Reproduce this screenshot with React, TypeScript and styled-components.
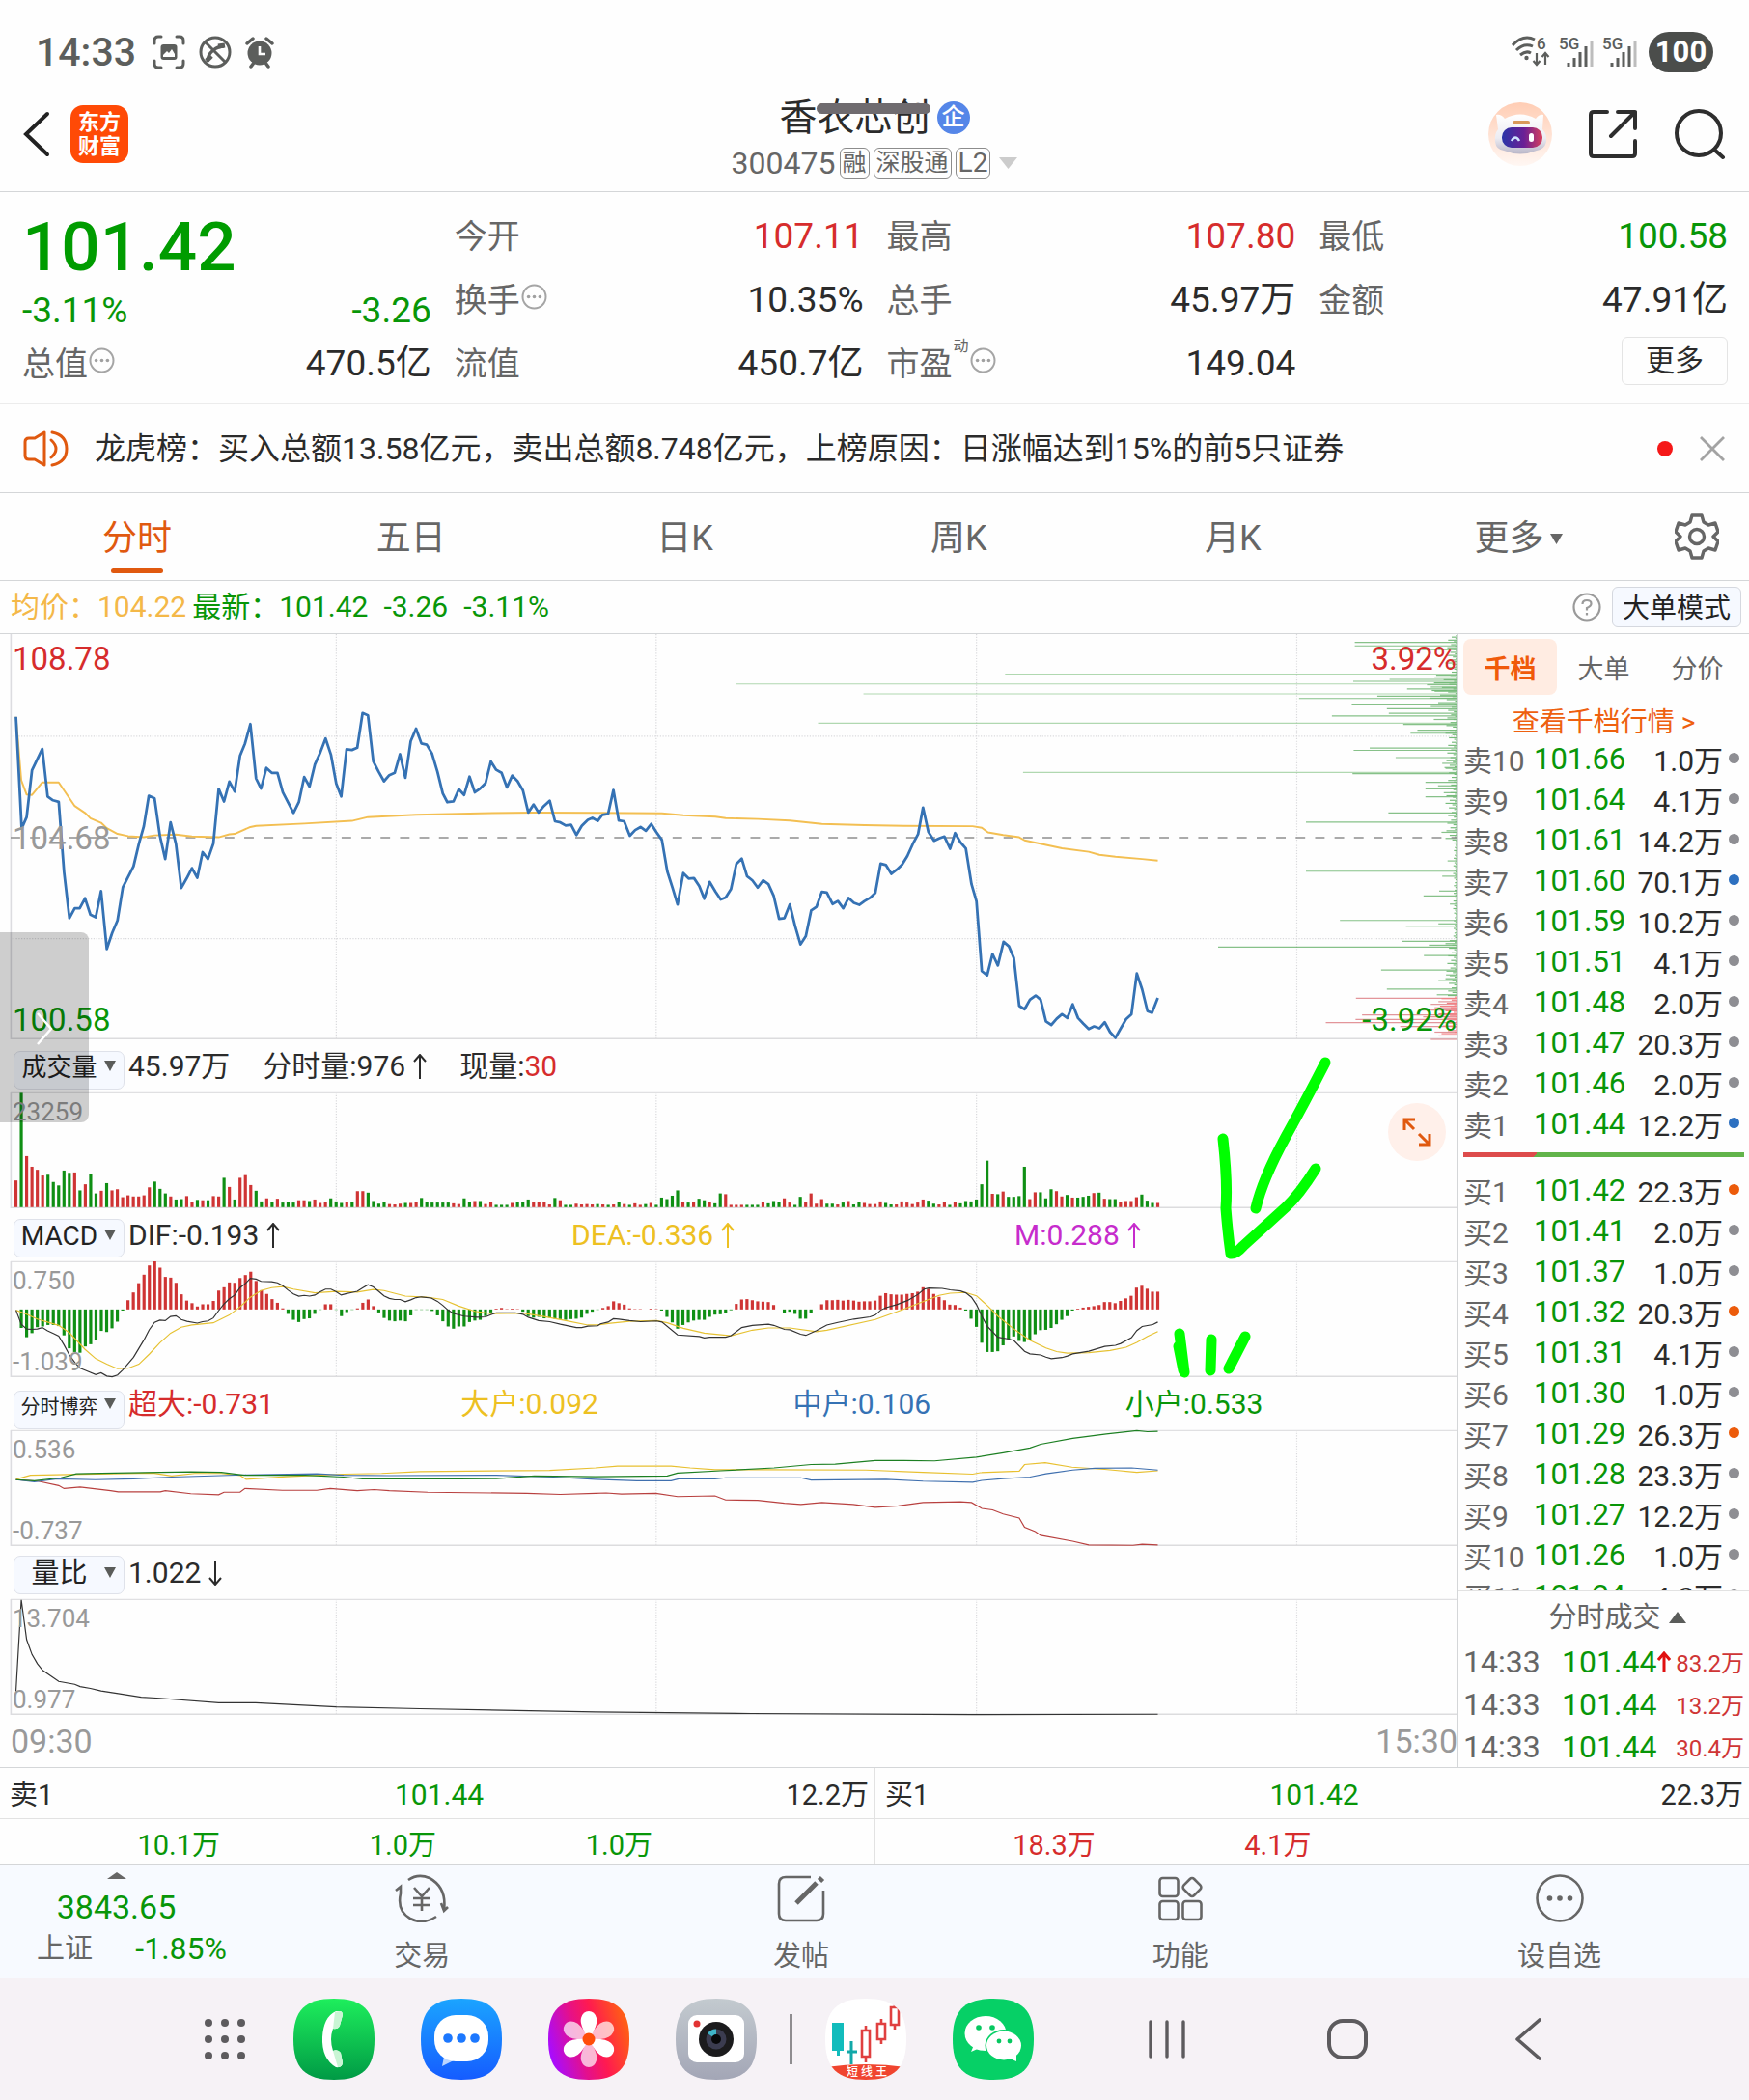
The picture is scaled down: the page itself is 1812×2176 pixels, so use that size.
import React from "react";
import styled, { createGlobalStyle, css } from "styled-components";

const GREEN = "#089608";
const RED = "#d62c2c";
const ORANGE = "#e0590f";
const GREY = "#666666";
const INK = "#2b2b2b";
const LINE = "#d4d6d8";

const GlobalStyle = createGlobalStyle`
  * { box-sizing: border-box; }
  body { margin: 0; background: #ffffff; }
  button, select { font-family: inherit; }
  button { border: 0; padding: 0; background: none; cursor: pointer; color: inherit; }
  dl, dd, dt, h1, p, ul { margin: 0; padding: 0; }
  ul { list-style: none; }
  table { border-collapse: collapse; }
  td, th { padding: 0; font-weight: 400; text-align: left; }
  svg { display: block; flex: none; }
`;

const Page = styled.div`
  width: 100%;
  background: #fefefe;
  color: ${INK};
  font-family: Roboto, "Noto Sans CJK SC", sans-serif;
`;

/* ---------- status bar ---------- */

const StatusBar = styled.div`
  display: flex;
  justify-content: space-between;
  align-items: center;
  height: 80px;
  padding: 28px 37px 0 37px;
  color: #5c5e5c;
`;

const StatusGroup = styled.div<{ $gap: number }>`
  display: flex;
  align-items: center;
  gap: ${(p) => p.$gap}px;
`;

const Clock = styled.span`
  font-size: 41px;
  line-height: 48px;
  font-weight: 500;
  margin-right: 3px;
`;

const Battery = styled.span`
  width: 67px;
  height: 42px;
  margin-left: 3px;
  border-radius: 21px;
  background: #4b4d4b;
  color: #ffffff;
  font-size: 31px;
  line-height: 42px;
  font-weight: 700;
  text-align: center;
`;

/* ---------- header ---------- */

const Header = styled.header`
  display: grid;
  grid-template-columns: 1fr auto 1fr;
  align-items: center;
  height: 119px;
  padding: 0 24px;
  border-bottom: 1px solid ${LINE};
`;

const HeaderSide = styled.div<{ $end?: boolean }>`
  display: flex;
  align-items: center;
  gap: ${(p) => (p.$end ? 38 : 21)}px;
  justify-content: ${(p) => (p.$end ? "flex-end" : "flex-start")};
`;

const BrandLogo = styled.span`
  width: 60px;
  height: 60px;
  padding: 5px 0;
  border-radius: 13px;
  background: #ff4a06;
  color: #ffffff;
  font-size: 22px;
  line-height: 25px;
  font-weight: 700;
  text-align: center;
`;

const HeaderCenter = styled.div`
  display: flex;
  flex-direction: column;
  align-items: center;
  gap: 5px;
  padding-top: 10px;
`;

const TitleRow = styled.div`
  display: flex;
  align-items: center;
  gap: 7px;
  height: 44px;
`;

const StockName = styled.h1`
  position: relative;
  font-size: 39px;
  line-height: 44px;
  font-weight: 400;
`;

const NameStrike = styled.span`
  position: absolute;
  left: 39px;
  right: 0;
  top: 7px;
  height: 11px;
  border-radius: 6px;
  background: #6f6b6f;
`;

const CompanyBadge = styled.span`
  width: 34px;
  height: 34px;
  border-radius: 50%;
  background: #5586e8;
  color: #ffffff;
  font-size: 24px;
  line-height: 33px;
  font-weight: 500;
  text-align: center;
`;

const CodeRow = styled.div`
  display: flex;
  align-items: center;
  gap: 4px;
  height: 40px;
  color: ${GREY};
  font-size: 32px;
  line-height: 40px;
  > svg {
    margin-left: 5px;
  }
`;

const CodeTag = styled.span`
  height: 32px;
  padding: 0 2px;
  border: 1px solid #8c8c8c;
  border-radius: 6px;
  font-size: 25px;
  line-height: 30px;
`;

const CodeTagWide = styled(CodeTag)`
  font-size: 28px;
`;

/* ---------- quote ---------- */

const Quote = styled.section`
  display: grid;
  grid-template-columns: repeat(4, 1fr);
  column-gap: 24px;
  padding: 13px 22px 8px 23px;
  border-bottom: 1px solid #ececec;
`;

const QuoteColumn = styled.dl`
  display: flex;
  flex-direction: column;
  min-width: 0;
`;

const Price = styled.dt`
  color: #009c00;
  font-size: 71px;
  line-height: 88px;
  font-weight: 500;
`;

const ChangeRow = styled.dd`
  display: flex;
  justify-content: space-between;
  color: ${GREEN};
  font-size: 37px;
  line-height: 44px;
`;

const QuoteRow = styled.div`
  display: flex;
  justify-content: space-between;
  align-items: center;
  height: 66px;
`;

const QuoteLabel = styled.dt`
  display: flex;
  align-items: center;
  gap: 1px;
  color: ${GREY};
  font-size: 34px;
  line-height: 44px;
  > svg {
    margin-bottom: 8px;
  }
`;

const QuoteSup = styled.sup`
  align-self: flex-start;
  font-size: 16px;
  line-height: 8px;
`;

const QuoteValue = styled.dd<{ $color?: string }>`
  color: ${(p) => p.$color ?? INK};
  font-size: 37px;
  line-height: 44px;
`;

const MoreButton = styled.button`
  width: 110px;
  height: 50px;
  margin: 0 0 6px auto;
  border: 1px solid #e4e4e4;
  border-radius: 6px;
  font-size: 30px;
  line-height: 46px;
  color: ${INK};
`;

/* ---------- notice ---------- */

const Notice = styled.section`
  display: flex;
  align-items: center;
  height: 92px;
  padding: 0 24px;
  border-bottom: 1px solid ${LINE};
`;

const NoticeText = styled.p`
  flex: 1;
  min-width: 0;
  padding-left: 26px;
  overflow: hidden;
  white-space: nowrap;
  text-overflow: ellipsis;
  font-size: 32px;
  line-height: 44px;
`;

const NoticeDot = styled.span`
  width: 16px;
  height: 16px;
  margin-right: 27px;
  border-radius: 50%;
  background: #f51818;
`;

/* ---------- period tabs ---------- */

const PeriodTabs = styled.nav`
  display: grid;
  grid-template-columns: repeat(6, minmax(0, 1fr)) 109px;
  height: 91px;
  border-bottom: 1px solid ${LINE};
`;

const PeriodTab = styled.button<{ $active?: boolean; $menu?: boolean }>`
  position: relative;
  display: flex;
  align-items: center;
  justify-content: center;
  gap: 6px;
  padding: 4px 0 0 ${(p) => (p.$menu ? 24 : 0)}px;
  color: ${(p) => (p.$active ? ORANGE : GREY)};
  font-size: 36px;
  line-height: 44px;
  ${(p) =>
    p.$active &&
    css`
      &::after {
        content: "";
        position: absolute;
        left: 50%;
        bottom: 7px;
        width: 54px;
        height: 5px;
        margin-left: -27px;
        border-radius: 3px;
        background: ${ORANGE};
      }
    `}
`;

const GearButton = styled.button`
  display: flex;
  align-items: center;
  justify-content: center;
`;

/* ---------- latest line ---------- */

const LatestBar = styled.div`
  display: flex;
  align-items: center;
  height: 55px;
  padding: 0 8px 0 11px;
  border-bottom: 1px solid ${LINE};
  font-size: 30px;
  line-height: 40px;
`;

const LatestText = styled.span<{ $color: string; $gap: number }>`
  margin-right: ${(p) => p.$gap}px;
  color: ${(p) => p.$color};
`;

const LatestActions = styled.div`
  display: flex;
  align-items: center;
  gap: 11px;
  margin-left: auto;
`;

const ModeButton = styled.button`
  width: 134px;
  height: 42px;
  padding-top: 4px;
  border: 1px solid #d5d8df;
  border-radius: 6px;
  background: #f6f9ff;
  font-size: 28px;
  line-height: 36px;
  color: #222222;
`;

/* ---------- charts ---------- */

const Board = styled.main`
  display: flex;
`;

const ChartColumn = styled.section`
  position: relative;
  flex: 1;
  min-width: 0;
  padding-left: 11px;
`;

const ChartFrame = styled.div<{ $height: number }>`
  position: relative;
  height: ${(p) => p.$height}px;
  > svg:first-child {
    width: 100%;
    height: 100%;
    overflow: visible;
  }
`;

type Spot = "top" | "middle" | "bottom";

const AxisLabel = styled.span<{ $spot: Spot; $color?: string; $right?: boolean; $large?: boolean }>`
  position: absolute;
  ${(p) => (p.$right ? "right: 1px;" : "left: 2px;")}
  ${(p) => p.$spot === "top" && `top: ${p.$large ? 6 : 4}px;`}
  ${(p) => p.$spot === "middle" && "top: 192px;"}
  ${(p) => p.$spot === "bottom" && "bottom: 0;"}
  color: ${(p) => p.$color ?? "#999999"};
  font-size: ${(p) => (p.$large ? 33 : 26)}px;
  line-height: ${(p) => (p.$large ? 40 : 32)}px;
`;

const IndicatorBar = styled.div`
  display: flex;
  align-items: center;
  height: 55px;
  padding-left: 3px;
  font-size: 30px;
  line-height: 40px;
`;

const IndicatorPicker = styled.label`
  position: relative;
  flex: none;
  width: 115px;
  height: 40px;
  margin-right: 4px;
  svg {
    position: absolute;
    right: 9px;
    top: 14px;
    pointer-events: none;
  }
`;

const IndicatorSelect = styled.select<{ $size: number }>`
  appearance: none;
  width: 115px;
  height: 40px;
  padding: 0 24px 6px 4px;
  border: 1px solid #dfe2ea;
  border-radius: 7px;
  background: #f6f9ff;
  color: #222222;
  font-size: ${(p) => p.$size}px;
  text-align-last: center;
`;

const IndicatorValues = styled.div<{ $even?: boolean }>`
  display: flex;
  flex: 1;
  gap: ${(p) => (p.$even ? 0 : 34)}px;
  > span {
    flex: ${(p) => (p.$even ? "1 1 0" : "none")};
  }
`;

const IndicatorValue = styled.span<{ $color?: string }>`
  display: flex;
  align-items: center;
  gap: 8px;
  color: ${(p) => p.$color ?? INK};
`;

const Hot = styled.span`
  color: ${RED};
`;

const TimeAxis = styled.div`
  display: flex;
  justify-content: space-between;
  align-items: center;
  height: 54px;
  color: #999999;
  font-size: 34px;
  line-height: 44px;
`;

const ExpandButton = styled.button`
  position: absolute;
  right: 12px;
  top: 11px;
  display: flex;
  align-items: center;
  justify-content: center;
  width: 60px;
  height: 60px;
  border-radius: 50%;
  background: #fff0ea;
`;

const DrawerHandle = styled.button`
  position: absolute;
  left: 0;
  top: 309px;
  display: flex;
  align-items: flex-end;
  width: 92px;
  height: 197px;
  padding: 0 0 80px 38px;
  border-radius: 0 8px 8px 0;
  background: rgba(0, 0, 0, 0.19);
`;

const Marks = styled.svg`
  position: absolute;
  left: 0;
  top: 0;
  width: 100%;
  height: 100%;
  pointer-events: none;
`;

/* ---------- order book ---------- */

const SidePanel = styled.aside`
  display: flex;
  flex-direction: column;
  width: 302px;
  border-left: 1px solid ${LINE};
`;

const Book = styled.div`
  flex: 1 1 0px;
  min-height: 0;
  padding: 5px 5px 0;
  overflow: hidden;
`;

const BookTabs = styled.div`
  display: grid;
  grid-template-columns: repeat(3, 1fr);
  height: 58px;
`;

const BookTab = styled.button<{ $active?: boolean }>`
  padding-top: 5px;
  border-radius: 8px;
  background: ${(p) => (p.$active ? "#ffece2" : "transparent")};
  color: ${(p) => (p.$active ? "#f05a0a" : GREY)};
  font-size: 27px;
  line-height: 40px;
  font-weight: ${(p) => (p.$active ? 700 : 400)};
`;

const BookLink = styled.a`
  display: block;
  height: 46px;
  padding-top: 12px;
  color: #ee600f;
  font-size: 28px;
  line-height: 34px;
  text-align: center;
  text-decoration: none;
`;

const BookTable = styled.table`
  width: 100%;
  table-layout: fixed;
  font-size: 30px;
  line-height: 36px;
  tr {
    height: 42px;
  }
  th {
    width: 73px;
    padding-top: 4px;
    color: ${GREY};
    white-space: nowrap;
  }
`;

const BookPrice = styled.td`
  width: 96px;
  color: ${GREEN};
  font-size: 31px;
`;

const BookAmount = styled.td`
  width: 100px;
  padding-top: 4px;
  text-align: right;
  white-space: nowrap;
`;

const BookDotCell = styled.td`
  width: 22px;
  padding: 0 5px 4px 6px;
`;

const BookDot = styled.span<{ $color: string }>`
  display: block;
  width: 11px;
  height: 11px;
  border-radius: 50%;
  background: ${(p) => p.$color};
`;

const Balance = styled.div`
  height: 5px;
  margin: 8px 0 14px;
  background: linear-gradient(125deg, #dd4b4b 26%, #62b44a 26%);
`;

const Trades = styled.div`
  height: 183px;
  padding: 0 5px;
  border-top: 1px solid #e2e2e2;
`;

const TradesHeader = styled.button`
  display: flex;
  align-items: center;
  justify-content: center;
  gap: 8px;
  width: 100%;
  height: 51px;
  padding: 2px 0 0 28px;
  color: ${GREY};
  font-size: 29px;
  line-height: 40px;
`;

const TradesTable = styled.table`
  width: 100%;
  table-layout: fixed;
  white-space: nowrap;
  tr {
    height: 44px;
  }
`;

const TradeTime = styled.td`
  width: 102px;
  color: ${GREY};
  font-size: 32px;
  line-height: 40px;
`;

const TradePrice = styled.td`
  width: 99px;
  color: ${GREEN};
  font-size: 32px;
  line-height: 40px;
`;

const TradeArrow = styled.td`
  width: 16px;
`;

const TradeAmount = styled.td`
  padding: 4px 0 0 0;
  color: #cf3535;
  font-size: 24px;
  line-height: 36px;
  text-align: right;
`;

/* ---------- best levels ---------- */

const Levels = styled.section`
  display: grid;
  grid-template-columns: 1fr 1fr;
  border-top: 1px solid ${LINE};
  border-bottom: 1px solid ${LINE};
  font-size: 29px;
`;

const LevelSide = styled.div`
  & + & {
    border-left: 1px solid #e2e2e2;
  }
`;

const LevelBest = styled.div`
  display: grid;
  grid-template-columns: 1fr auto 1fr;
  height: 53px;
  padding: 2px 6px 0 10px;
  border-bottom: 1px solid #e2e2e2;
  line-height: 52px;
  span:last-child {
    text-align: right;
  }
`;

const LevelPrice = styled.span`
  color: ${GREEN};
  font-size: 30px;
`;

const LevelQueue = styled.div<{ $color: string }>`
  display: grid;
  grid-template-columns: repeat(4, 1fr);
  height: 46px;
  padding: 2px 6px 0 4px;
  color: ${(p) => p.$color};
  line-height: 50px;
  text-align: right;
`;

/* ---------- bottom bar ---------- */

const BottomBar = styled.nav`
  display: flex;
  height: 118px;
  background: #f7faff;
  color: ${GREY};
`;

const IndexButton = styled.button`
  display: flex;
  flex-direction: column;
  align-items: center;
  width: 241px;
  padding-top: 8px;
  color: ${GREEN};
`;

const IndexValue = styled.span`
  margin-top: 8px;
  font-size: 34px;
  line-height: 42px;
`;

const IndexRow = styled.span`
  display: flex;
  justify-content: space-between;
  width: 100%;
  padding: 0 6px 0 38px;
  font-size: 32px;
  line-height: 44px;
`;

const IndexName = styled.span`
  color: ${GREY};
  font-size: 29px;
`;

const BottomItem = styled.button`
  display: flex;
  flex: 1 1 0;
  flex-direction: column;
  align-items: center;
  gap: 15px;
  padding-top: 10px;
  font-size: 29px;
  line-height: 40px;
`;

/* ---------- system dock ---------- */

const Dock = styled.footer`
  display: flex;
  align-items: center;
  justify-content: center;
  height: 126px;
  padding-left: 4px;
  background: #f6f2f6;
`;

const DockButton = styled.button`
  display: flex;
  align-items: center;
  justify-content: center;
  width: 84px;
  height: 84px;
`;

const DockApps = styled.div`
  display: flex;
  gap: 48px;
  margin-left: 29px;
`;

const DockDivider = styled.span`
  width: 3px;
  height: 52px;
  margin: 0 5px 0 34px;
  background: #8f8d90;
`;

const DockNav = styled.div`
  display: flex;
  gap: 103px;
  margin-left: 96px;
`;

/* ---------- series ---------- */

type Pt = [number, number];

const pairs = (text: string, shift = 0): Pt[] =>
  text
    .trim()
    .split(/\s+/)
    .map((p) => {
      const [x, y] = p.split(",").map(Number);
      return [x + shift, y] as Pt;
    });

const HALF = 1568;
const track = (first: string, second: string) =>
  [...pairs(first), ...pairs(second, HALF)].map((p) => p.join(",")).join(" ");

const PRICE = track(
  `42,233 57,526 70,496 84,373 111,317 125,442 139,452 154,456 168,640 182,761 196,735 209,735 223,709 237,752 251,759 265,690 280,842 294,800 308,767 322,680 350,625 364,566 377,520 390,440 405,447 419,545 433,606 447,510 461,566 475,682 489,657 503,630 517,655 531,588 545,606 559,566 573,422 587,455 601,403 615,429 629,335 642,303 656,252 671,395 684,421 698,367 712,380 727,380 741,431 755,458 769,485 783,457 797,391 811,416 825,358 839,327 853,290 867,332 881,408 894,442 908,318 922,320 936,314 950,223 964,229 978,350 992,377 1006,402 1020,386 1034,380 1048,331 1062,393 1076,297 1090,264 1104,303 1118,306 1132,330 1146,377 1160,434 1172,457 1188,455 1202,423 1216,438 1230,390 1244,431 1258,421 1272,407 1286,350 1300,372 1314,380 1328,418 1342,387 1356,402 1370,426 1384,484 1398,463 1411,484 1425,467 1440,453 1454,507 1468,510 1482,518 1496,516 1510,543 1524,519 1540,503 1552,498 1566,506`,
  `10,490 25,488 39,425 53,505 67,507 82,545 96,530 110,522 124,532 138,514 152,536 166,556 180,638 194,682 207,725 222,643 236,657 250,656 264,677 277,710 291,666 306,691 320,712 333,707 347,685 361,619 375,605 389,651 403,662 417,681 431,662 445,672 459,703 473,763 487,761 501,725 515,782 529,830 543,808 557,741 571,731 585,692 598,694 613,724 627,716 641,735 655,708 669,721 683,726 697,716 711,708 725,695 739,618 753,622 767,645 781,634 795,621 809,598 823,567 837,541 850,471 864,535 879,558 892,552 906,547 921,579 934,538 948,562 962,578 977,672 990,717 1004,900 1018,911 1032,855 1046,885 1061,823 1075,835 1088,866 1102,991 1116,1000 1130,975 1145,964 1158,975 1172,1032 1186,1041 1200,1025 1214,1013 1228,1023 1242,987 1256,1023 1270,1038 1284,1052 1298,1045 1312,1050 1326,1034 1340,1060 1354,1075 1368,1050 1382,1026 1396,1013 1410,906 1424,948 1438,1005 1450,1009 1465,970`
);

const AVERAGE = track(
  `42,233 56,400 70,437 84,438 111,405 154,405 196,467 223,485 237,499 265,511 280,525 308,540 336,546 377,549 405,544 461,542 503,547 573,549 601,541 615,540 656,522 671,519 797,513 922,506 964,496 1090,490 1258,486 1400,484 1567,485`,
  `166,486 222,491 306,495 333,499 417,501 501,505 585,514 697,517 800,519 980,520 1004,524 1020,536 1060,543 1102,549 1116,557 1214,578 1284,587 1312,595 1354,600 1424,606 1465,610`
);

const DIF = track(
  `42,309 56,347 70,360 84,361 98,360 111,356 125,365 140,372 154,379 168,403 182,430 196,450 209,465 223,471 251,483 265,478 280,487 294,489 308,484 322,470 336,453 350,436 364,412 377,390 391,362 405,342 419,336 433,337 447,326 461,324 475,334 490,339 517,344 531,340 545,338 559,330 573,310 587,292 601,278 615,268 629,248 642,238 656,223 671,225 684,231 712,232 727,235 741,243 755,255 769,265 783,271 797,269 811,271 825,268 839,259 853,252 867,252 881,259 894,268 908,264 922,261 936,258 950,249 964,240 978,246 992,258 1006,270 1020,277 1034,280 1048,280 1062,286 1076,281 1090,275 1104,273 1130,276 1146,285 1160,296 1174,309 1188,318 1216,325 1250,328 1272,327 1286,321 1300,316 1350,316 1370,320 1384,328 1411,337 1440,340 1468,347 1510,356 1524,356 1540,352 1566,351`,
  `5,346 25,341 39,332 53,333 81,337 110,340 152,338 166,341 207,376 264,380 277,384 291,382 333,382 347,378 375,356 403,350 445,347 459,350 487,361 501,362 529,374 543,377 571,364 598,349 627,342 669,333 711,327 725,322 739,309 753,302 781,294 809,283 837,266 853,252 865,249 900,250 921,254 948,257 962,262 977,274 990,294 1004,325 1018,352 1046,382 1075,387 1088,391 1116,420 1130,427 1158,430 1172,436 1186,440 1214,437 1228,433 1242,427 1284,420 1326,407 1354,404 1368,399 1396,383 1410,364 1424,353 1452,348 1465,341`
);

const DEA = track(
  `42,309 70,320 98,333 154,350 182,370 223,415 251,440 280,455 308,467 336,466 364,455 391,428 419,397 447,371 475,355 503,349 559,343 601,322 629,300 656,274 684,256 712,248 741,245 769,252 825,262 881,258 936,260 978,253 1006,256 1062,271 1118,274 1160,280 1202,298 1244,312 1286,318 1370,317 1425,326 1482,337 1540,349 1566,349`,
  `25,345 80,339 152,337 180,343 222,358 277,371 347,378 403,363 445,357 501,357 571,367 598,363 725,334 795,308 837,291 892,269 921,263 962,261 990,270 1020,298 1046,325 1088,360 1130,390 1172,411 1200,421 1228,425 1284,424 1340,418 1382,409 1410,396 1438,380 1465,367`
);

const GAME: [string, string][] = [
  [
    "#b8403f",
    track(
      `42,767 100,771 154,783 168,791 210,787 290,797 310,800 420,800 433,797 500,805 573,808 587,801 629,801 642,791 740,796 830,796 865,791 936,797 980,794 1020,797 1120,801 1380,804 1468,807 1560,804`,
      `20,803 60,806 150,804 207,813 305,811 333,822 417,823 487,831 530,834 585,829 667,834 725,842 785,838 850,829 948,827 977,829 1004,845 1032,849 1060,860 1102,871 1116,896 1144,908 1158,918 1242,934 1284,944 1400,945 1424,942 1465,944`
    ),
  ],
  [
    "#e8c030",
    track(
      `42,766 80,755 180,753 400,749 450,757 510,750 580,750 630,756 645,766 750,759 900,752 1000,750 1100,745 1440,742 1560,735`,
      `50,730 190,730 240,735 305,740 420,740 700,741 850,747 980,752 1000,748 1102,744 1116,726 1170,721 1240,733 1326,739 1410,747 1465,743`
    ),
  ],
  [
    "#3f6fae",
    track(
      `42,767 90,773 150,765 250,767 350,765 450,760 640,754 830,751 900,755 1020,756 1300,755 1450,760 1560,766`,
      `100,770 190,770 210,765 305,765 333,762 530,762 557,768 753,766 850,771 980,774 1004,769 1060,764 1130,760 1172,751 1242,741 1300,736 1396,735 1465,741`
    ),
  ],
  [
    "#1c7f22",
    track(
      `42,767 90,770 160,762 200,751 300,749 500,746 580,747 640,755 800,755 900,760 950,765 1200,765 1300,764 1400,757 1560,759`,
      `180,757 207,749 320,743 460,735 557,726 620,725 725,715 800,715 880,716 990,706 1060,694 1130,681 1158,671 1242,655 1330,643 1410,634 1438,637 1465,636`
    ),
  ],
];

const RATIO = track(
  `42,1340 56,1092 70,1200 84,1240 98,1265 112,1283 154,1313 196,1321 210,1327 237,1332 265,1339 310,1346 370,1356 420,1359 573,1371 670,1371 881,1382 1100,1387 1560,1396`,
  `400,1400 980,1403 1465,1402`
);

/* Rising minutes are positive, falling minutes negative. */
const VOLUME = [
  70, -300, 134, 106, 98, 83, -85, -66, -57, -96, -90, 91, -44, 60, -88, -36, 43, -63, 44, 47, 26, 31, 28, 28, 31, 52,
  -67, -48, -36, 28, -20, -21, 29, 13, -19, 18, -18, 29, 28, -77, 53, -20, 77, 84, 58, -43, -15, 23, -13, 22, -12, -13,
  -12, 18, 18, -16, 20, 11, 13, -23, -15, -11, 14, -13, 42, 42, -38, -16, -9, -14, 8, 7, 9, -11, 11, 13, -24, -14, -12,
  -12, -12, -12, 10, 8, -23, -13, 16, -16, 8, 14, -6, -6, -6, 11, -14, -13, -20, 14, 14, 14, 7, -24, 18, -6, -6, 9, 7,
  8, 7, -8, 7, -6, 7, -14, 8, -6, 10, 6, -8, 11, -6, -25, -21, -30, -44, 14, -12, 14, -22, -18, 14, -10, -36, 34, 6, 6,
  6, -6, -6, -6, 14, -10, -16, -14, 23, 12, -6, -27, 13, 36, 9, 21, -9, -9, 7, -12, 16, -7, -13, 11, 8, 8, 15, -11, -7,
  7, 15, 12, 8, 12, 20, -17, -9, 7, 13, -6, 13, -10, -16, -15, -20, -60, -122, 35, -34, 41, -27, -27, -29, -106, 21,
  39, -39, -23, -47, 42, 28, -32, 25, -25, -27, -30, 37, -38, 22, -21, -21, 13, 16, 16, 26, -33, -17, -11, 11,
];

const MACD = [
  0, -50, -75, -64, -48, -46, -42, -42, -45, -70, -105, -115, -117, -100, -94, -82, -58, -61, -51, -33, -3, 25, 46, 71,
  94, 119, 130, 113, 88, 86, 72, 41, 24, 17, 8, 14, 14, 23, 51, 60, 73, 72, 85, 93, 102, 77, 52, 42, 28, 18, 3, -12,
  -28, -34, -26, -24, -12, -1, 14, 14, -1, -18, -7, -1, 3, 18, 27, 9, -8, -23, -30, -32, -30, -32, -16, -1, -1, -1, -4,
  -16, -32, -46, -52, -46, -46, -34, -30, -28, -18, -8, 2, 4, 1, 2, 1, -6, -18, -22, -20, -24, -22, -25, -26, -28, -26,
  -25, -22, -12, -6, -1, 4, 9, 22, 17, 13, 3, 1, 1, 0, 2, 1, -3, -20, -35, -52, -42, -35, -30, -28, -28, -20, -14, -13,
  -10, -2, 15, 27, 28, 25, 22, 21, 20, 12, 0, -9, -6, -12, -25, -25, -10, 0, 14, 25, 25, 26, 24, 26, 24, 21, 22, 22, 24,
  37, 44, 41, 40, 40, 42, 44, 48, 60, 56, 42, 34, 25, 13, 12, 5, -3, -25, -47, -90, -115, -115, -113, -97, -80, -73,
  -85, -88, -82, -67, -56, -55, -50, -40, -28, -18, -3, 2, 5, 7, 9, 12, 20, 20, 17, 23, 30, 37, 59, 64, 56, 48, 48,
];

/* Resting orders per price: [height in the chart, length]. */
const DEPTH: Pt[] = [
  [38, 269], [47, 269], [57, 220], [121, 1185], [129, 60], [135, 178], [140, 273], [147, 1890], [149, 80], [155, 70],
  [160, 132], [166, 60], [173, 1556], [179, 210], [185, 415], [200, 277], [206, 70], [212, 185], [224, 180], [231, 329],
  [240, 62], [250, 1675], [253, 142], [268, 105], [276, 123], [315, 230], [321, 272], [340, 162], [355, 40], [366, 34],
  [379, 1138], [382, 275], [405, 84], [414, 51], [422, 84], [432, 36], [443, 84], [485, 181], [509, 397], [536, 42],
  [611, 26], [638, 397], [651, 40], [690, 48], [703, 89], [724, 20], [767, 308], [776, 50], [782, 135], [822, 145],
  [832, 75], [837, 627], [859, 88], [897, 200], [910, 30], [925, 50], [947, 185], [962, 54], [971, 266], [980, 50],
  [987, 70], [996, 60], [1002, 100], [1015, 250], [1020, 90], [1027, 267], [1035, 345], [1045, 150], [1060, 60],
  [1070, 50], [1079, 70],
];

const MINOR: Pt[] = Array.from({ length: 262 }, (_, i) => {
  const y = 20 + i * 4;
  const noise = ((i * 37) % 23) / 23;
  const busy = y > 120 && y < 200 ? 76 : y > 955 ? 50 : y > 560 && y < 820 ? 8 : 30;
  return [y, 4 + noise * noise * busy];
});

/* ---------- chart parts ---------- */

const LEFT = 28;
const WIDTH = 3790;
const RIGHT = LEFT + WIDTH;
const COLUMNS = [881, 1719, 2558, 3397];

function Frame({ y, h, main }: { y: number; h: number; main?: boolean }) {
  return (
    <g fill="none">
      <g stroke="#d9d9dc" strokeWidth={3} strokeDasharray="3 4">
        {COLUMNS.map((x) => (
          <line key={x} x1={x} x2={x} y1={y} y2={y + h} />
        ))}
        {main && <line x1={LEFT} x2={RIGHT} y1={284} y2={284} />}
        {main && <line x1={LEFT} x2={RIGHT} y1={815} y2={815} />}
      </g>
      {!main && <line x1={LEFT} x2={RIGHT} y1={y + 1} y2={y + 1} stroke="#e0e0e2" strokeWidth={3} />}
      <line x1={LEFT} x2={RIGHT} y1={y + h - 2} y2={y + h - 2} stroke="#dcdcde" strokeWidth={4} />
      <line x1={LEFT + 1} x2={LEFT + 1} y1={y} y2={y + h} stroke="#dcdce0" strokeWidth={4} />
    </g>
  );
}

/* Draws one bar per minute; "stacked" keeps falling bars above the base line too. */
function Bars({ values, base, stacked }: { values: number[]; base: number; stacked?: boolean }) {
  const step = 2991 / (values.length - 1);
  return (
    <g>
      {values.map((v, i) => (
        <rect
          key={i}
          x={38 + i * step}
          y={v > 0 || stacked ? base - Math.abs(v) : base}
          width={8}
          height={Math.abs(v)}
          fill={v > 0 ? "#cf3434" : "#0f8f14"}
        />
      ))}
    </g>
  );
}

const Plot = ({ y, h, children }: { y: number; h: number; children: React.ReactNode }) => (
  <svg viewBox={`${LEFT} ${y} ${WIDTH} ${h}`} preserveAspectRatio="none" aria-hidden="true">
    {children}
  </svg>
);

/* ---------- small icons ---------- */

const Triangle = ({ w, h, color, up }: { w: number; h: number; color: string; up?: boolean }) => (
  <svg width={w} height={h} viewBox="0 0 10 10" preserveAspectRatio="none" aria-hidden="true">
    <path d={up ? "M0 10L5 0L10 10Z" : "M0 0H10L5 10Z"} fill={color} />
  </svg>
);

const Arrow = ({ down }: { down?: boolean }) => (
  <svg width="14" height="26" viewBox="0 0 14 26" fill="none" stroke="currentColor" strokeWidth="2" aria-hidden="true">
    {down ? <path d="M7 0V25M1 18L7 25L13 18" /> : <path d="M7 26V1M1 8L7 1L13 8" />}
  </svg>
);

const Dots = () => (
  <svg width="27" height="27" viewBox="0 0 27 27" aria-hidden="true">
    <circle cx="13.5" cy="13.5" r="12" fill="none" stroke="#a5a5a5" strokeWidth="2" />
    <g fill="#a0a0a0">
      <circle cx="7.6" cy="13.5" r="1.8" />
      <circle cx="13.5" cy="13.5" r="1.8" />
      <circle cx="19.4" cy="13.5" r="1.8" />
    </g>
  </svg>
);

const Signal = () => (
  <svg width="36" height="42" viewBox="0 -5 36 42" aria-hidden="true">
    <text x="0" y="13" fontSize="17" fontWeight="500" fill="#5c5e5c">5G</text>
    <g strokeWidth="3" stroke="#5c5e5c">
      <path d="M10 31V27M16 31V22M22 31V16M28 31V10" />
      <path d="M34 31V4" stroke="#bdbdbd" />
    </g>
  </svg>
);

function Picker({ name, options, size }: { name: string; options: string[]; size: number }) {
  return (
    <IndicatorPicker>
      <IndicatorSelect $size={size} aria-label={name} defaultValue={options[0]}>
        {options.map((o) => (
          <option key={o}>{o}</option>
        ))}
      </IndicatorSelect>
      <Triangle w={12} h={11} color="#5a5c5a" />
    </IndicatorPicker>
  );
}

/* ---------- order book data ---------- */

const DOT_GREY = "#8e8e93";
const DOT_BLUE = "#2d70c0";
const DOT_ORANGE = "#ec5b0b";

type Level = [string, string, string, string];

const SELLS: Level[] = [
  ["卖10", "101.66", "1.0万", DOT_GREY],
  ["卖9", "101.64", "4.1万", DOT_GREY],
  ["卖8", "101.61", "14.2万", DOT_GREY],
  ["卖7", "101.60", "70.1万", DOT_BLUE],
  ["卖6", "101.59", "10.2万", DOT_GREY],
  ["卖5", "101.51", "4.1万", DOT_GREY],
  ["卖4", "101.48", "2.0万", DOT_GREY],
  ["卖3", "101.47", "20.3万", DOT_GREY],
  ["卖2", "101.46", "2.0万", DOT_GREY],
  ["卖1", "101.44", "12.2万", DOT_BLUE],
];

const BUYS: Level[] = [
  ["买1", "101.42", "22.3万", DOT_ORANGE],
  ["买2", "101.41", "2.0万", DOT_GREY],
  ["买3", "101.37", "1.0万", DOT_GREY],
  ["买4", "101.32", "20.3万", DOT_ORANGE],
  ["买5", "101.31", "4.1万", DOT_GREY],
  ["买6", "101.30", "1.0万", DOT_GREY],
  ["买7", "101.29", "26.3万", DOT_ORANGE],
  ["买8", "101.28", "23.3万", DOT_GREY],
  ["买9", "101.27", "12.2万", DOT_GREY],
  ["买10", "101.26", "1.0万", DOT_GREY],
  ["买11", "101.24", "4.0万", DOT_GREY],
];

const TRADES: [string, string, boolean, string][] = [
  ["14:33", "101.44", true, "83.2万"],
  ["14:33", "101.44", false, "13.2万"],
  ["14:33", "101.44", false, "30.4万"],
];

function LevelTable({ levels }: { levels: Level[] }) {
  return (
    <BookTable>
      <tbody>
        {levels.map(([name, price, amount, dot]) => (
          <tr key={name}>
            <th scope="row">{name}</th>
            <BookPrice>{price}</BookPrice>
            <BookAmount>{amount}</BookAmount>
            <BookDotCell>
              <BookDot $color={dot} />
            </BookDotCell>
          </tr>
        ))}
      </tbody>
    </BookTable>
  );
}

/* ---------- sections ---------- */

function Status() {
  return (
    <StatusBar>
      <StatusGroup $gap={14}>
        <Clock>14:33</Clock>
        <svg width="34" height="36" viewBox="0 0 34 36" fill="none" stroke="currentColor" strokeWidth="3" strokeLinecap="round" aria-hidden="true">
          <path d="M2 9V6Q2 2 6 2H9M25 2H28Q32 2 32 6V9M32 27V30Q32 34 28 34H25M9 34H6Q2 34 2 30V27" />
          <rect x="8.5" y="10" width="17" height="16" rx="3" fill="currentColor" stroke="none" />
          <path d="M11 21L15 17L17 19L20 15L23 20V23H11Z" fill="#fefefe" stroke="none" />
        </svg>
        <svg width="34" height="34" viewBox="0 0 34 34" fill="none" stroke="currentColor" strokeWidth="3" aria-hidden="true">
          <circle cx="17" cy="17" r="15" />
          <path d="M9 27Q9 20 15 15Q20 11 26 11" strokeWidth="3.4" />
          <path d="M8 26L13 21M20 11L27 10" strokeWidth="5" />
          <path d="M6 6L28 28" />
        </svg>
        <svg width="30" height="34" viewBox="0 0 30 34" aria-hidden="true">
          <circle cx="15" cy="18" r="12.5" fill="currentColor" />
          <path d="M2 8L8 3M28 8L22 3M6 32L9 28M24 32L21 28" stroke="currentColor" strokeWidth="3.5" strokeLinecap="round" />
          <path d="M15 11V19H21" stroke="#fefefe" strokeWidth="2.6" fill="none" />
        </svg>
      </StatusGroup>
      <StatusGroup $gap={9}>
        <svg width="40" height="42" viewBox="0 -5 40 42" fill="none" stroke="#5c5e5c" strokeWidth="3" aria-hidden="true">
          <path d="M1 9Q12 -3 24 3M5 14Q13 6 22 10M9 19Q15 14 20 17" />
          <circle cx="15.5" cy="22" r="2.2" fill="#5c5e5c" stroke="none" />
          <path d="M26 17V29M22.5 25L26 29L29.5 25M35 29V17M31.5 21L35 17L38.5 21" strokeWidth="2.2" />
          <text x="26" y="13" fontSize="17" fontWeight="500" fill="#5c5e5c" stroke="none">6</text>
        </svg>
        <Signal />
        <Signal />
        <Battery>100</Battery>
      </StatusGroup>
    </StatusBar>
  );
}

function TopBar() {
  return (
    <Header>
      <HeaderSide>
        <button aria-label="返回">
          <svg width="28" height="48" viewBox="0 0 28 48" fill="none" stroke="#222" strokeWidth="4" strokeLinecap="round">
            <path d="M25 3L3 24L25 45" />
          </svg>
        </button>
        <BrandLogo>
          东方
          <br />
          财富
        </BrandLogo>
      </HeaderSide>
      <HeaderCenter>
        <TitleRow>
          <StockName>
            香农芯创
            <NameStrike />
          </StockName>
          <CompanyBadge>企</CompanyBadge>
        </TitleRow>
        <CodeRow>
          <span>300475</span>
          <CodeTag>融</CodeTag>
          <CodeTag>深股通</CodeTag>
          <CodeTagWide>L2</CodeTagWide>
          <Triangle w={19} h={12} color="#cccccc" />
        </CodeRow>
      </HeaderCenter>
      <HeaderSide $end>
        <button aria-label="助手">
          <svg width="66" height="68" viewBox="0 0 66 68">
            <defs>
              <linearGradient id="halo" x1="0" y1="0" x2="0" y2="1">
                <stop offset="0" stopColor="#ffcdb4" />
                <stop offset="1" stopColor="#fff7f3" />
              </linearGradient>
              <linearGradient id="visor" x1="0" y1="0" x2="1" y2="0">
                <stop offset="0" stopColor="#2a35a8" />
                <stop offset="0.55" stopColor="#6b1f95" />
                <stop offset="1" stopColor="#d8405c" />
              </linearGradient>
              <linearGradient id="helmet" x1="0" y1="0" x2="0" y2="1">
                <stop offset="0" stopColor="#ffffff" />
                <stop offset="0.6" stopColor="#ececf2" />
                <stop offset="1" stopColor="#b9b6c8" />
              </linearGradient>
            </defs>
            <circle cx="33" cy="34" r="33" fill="url(#halo)" />
            <path d="M7 42Q6 34 10 29L8 14Q13 13 17 18Q33 9 49 18Q53 13 57 14L56 29Q61 34 60 42Q58 50 50 51Q33 58 16 51Q8 50 7 42Z" fill="url(#helmet)" />
            <rect x="25" y="20" width="18" height="4" rx="2" fill="#d99a5b" />
            <rect x="14" y="27" width="42" height="21" rx="10" fill="url(#visor)" />
            <path d="M24 41Q28 34 32 41" fill="none" stroke="#cfe4ff" strokeWidth="2.5" />
            <rect x="42" y="33" width="5" height="9" rx="2.5" fill="#ffffff" />
          </svg>
        </button>
        <button aria-label="分享">
          <svg width="50" height="52" viewBox="0 0 50 52" fill="none" stroke="#2e2e2e" strokeWidth="4" strokeLinecap="round" strokeLinejoin="round">
            <path d="M19 3H5Q2 3 2 6V46Q2 49 5 49H45Q48 49 48 46V33M30 3H48V20M48 3L23 28" />
          </svg>
        </button>
        <button aria-label="搜索">
          <svg width="54" height="54" viewBox="0 0 54 54" fill="none" stroke="#2e2e2e" strokeWidth="4" strokeLinecap="round">
            <circle cx="26" cy="26" r="23" />
            <path d="M42 43L51 51" />
          </svg>
        </button>
      </HeaderSide>
    </Header>
  );
}

function QuotePanel() {
  return (
    <Quote>
      <QuoteColumn>
        <Price>101.42</Price>
        <ChangeRow>
          <span>-3.11%</span>
          <span>-3.26</span>
        </ChangeRow>
        <QuoteRow>
          <QuoteLabel>总值<Dots /></QuoteLabel>
          <QuoteValue>470.5亿</QuoteValue>
        </QuoteRow>
      </QuoteColumn>
      <QuoteColumn>
        <QuoteRow>
          <QuoteLabel>今开</QuoteLabel>
          <QuoteValue $color={RED}>107.11</QuoteValue>
        </QuoteRow>
        <QuoteRow>
          <QuoteLabel>换手<Dots /></QuoteLabel>
          <QuoteValue>10.35%</QuoteValue>
        </QuoteRow>
        <QuoteRow>
          <QuoteLabel>流值</QuoteLabel>
          <QuoteValue>450.7亿</QuoteValue>
        </QuoteRow>
      </QuoteColumn>
      <QuoteColumn>
        <QuoteRow>
          <QuoteLabel>最高</QuoteLabel>
          <QuoteValue $color={RED}>107.80</QuoteValue>
        </QuoteRow>
        <QuoteRow>
          <QuoteLabel>总手</QuoteLabel>
          <QuoteValue>45.97万</QuoteValue>
        </QuoteRow>
        <QuoteRow>
          <QuoteLabel>
            市盈<QuoteSup>动</QuoteSup>
            <Dots />
          </QuoteLabel>
          <QuoteValue>149.04</QuoteValue>
        </QuoteRow>
      </QuoteColumn>
      <QuoteColumn>
        <QuoteRow>
          <QuoteLabel>最低</QuoteLabel>
          <QuoteValue $color={GREEN}>100.58</QuoteValue>
        </QuoteRow>
        <QuoteRow>
          <QuoteLabel>金额</QuoteLabel>
          <QuoteValue>47.91亿</QuoteValue>
        </QuoteRow>
        <QuoteRow>
          <MoreButton>更多</MoreButton>
        </QuoteRow>
      </QuoteColumn>
    </Quote>
  );
}

function NoticeBar() {
  return (
    <Notice>
      <svg width="48" height="40" viewBox="0 0 48 40" fill="none" stroke={ORANGE} strokeWidth="3" strokeLinecap="round" strokeLinejoin="round" aria-hidden="true">
        <path d="M22 3V37L12 31H6Q2 31 2 27V13Q2 9 6 9H12Z" />
        <path d="M29 11Q39 20 29 29M30 3Q45 6 45 20Q45 34 30 37" />
      </svg>
      <NoticeText>龙虎榜：买入总额13.58亿元，卖出总额8.748亿元，上榜原因：日涨幅达到15%的前5只证券</NoticeText>
      <NoticeDot />
      <button aria-label="关闭">
        <svg width="28" height="26" viewBox="0 0 28 26" stroke="#a3a3a3" strokeWidth="2.8">
          <path d="M2 1L26 25M26 1L2 25" />
        </svg>
      </button>
    </Notice>
  );
}

const GEAR =
  "M18 2H28L30 9L35 12L42 10L45 19L40 24L45 29L42 38L35 36L30 39L28 46H18L16 39L11 36L4 38L1 29L6 24L1 19L4 10L11 12L16 9Z";

function Periods() {
  return (
    <PeriodTabs>
      <PeriodTab $active>分时</PeriodTab>
      <PeriodTab>五日</PeriodTab>
      <PeriodTab>日K</PeriodTab>
      <PeriodTab>周K</PeriodTab>
      <PeriodTab>月K</PeriodTab>
      <PeriodTab $menu>
        更多
        <Triangle w={13} h={11} color={GREY} />
      </PeriodTab>
      <GearButton aria-label="设置">
        <svg width="46" height="48" viewBox="0 0 46 48" fill="none" stroke={GREY} strokeWidth="3.4" strokeLinejoin="round">
          <path d={GEAR} />
          <circle cx="23" cy="24" r="7.5" />
        </svg>
      </GearButton>
    </PeriodTabs>
  );
}

function Charts() {
  return (
    <ChartColumn>
      <ChartFrame $height={420}>
        <Plot y={16} h={1063}>
          <Frame y={16} h={1063} main />
          <g strokeWidth={3} opacity={0.7}>
            {DEPTH.map(([y, len], i) => (
              <line key={i} x1={RIGHT - len} x2={RIGHT} y1={y} y2={y} stroke={y > 965 ? "#d86a70" : len > 1000 ? "#90c890" : "#55a858"} />
            ))}
            {MINOR.map(([y, len], i) => (
              <line key={i} x1={RIGHT - len} x2={RIGHT} y1={y} y2={y} stroke={y > 965 ? "#ee4a50" : "#3f9f45"} />
            ))}
          </g>
          <line x1={LEFT} x2={RIGHT} y1={550} y2={550} stroke="#8e8e8e" strokeWidth={4} strokeDasharray="25 26" />
          <g fill="none" strokeLinejoin="round">
            <polyline points={AVERAGE} stroke="#f3bf52" strokeWidth={5} />
            <polyline points={PRICE} stroke="#3572b4" strokeWidth={7} />
          </g>
        </Plot>
        <AxisLabel $spot="top" $large $color={RED}>108.78</AxisLabel>
        <AxisLabel $spot="middle" $large>104.68</AxisLabel>
        <AxisLabel $spot="bottom" $large $color={GREEN}>100.58</AxisLabel>
        <AxisLabel $spot="top" $large $right $color={RED}>3.92%</AxisLabel>
        <AxisLabel $spot="bottom" $large $right $color={GREEN}>-3.92%</AxisLabel>
      </ChartFrame>

      <IndicatorBar>
        <Picker name="指标一" options={["成交量"]} size={26} />
        <IndicatorValues>
          <IndicatorValue>45.97万</IndicatorValue>
          <IndicatorValue>分时量:976<Arrow /></IndicatorValue>
          <span>现量:<Hot>30</Hot></span>
        </IndicatorValues>
      </IndicatorBar>
      <ChartFrame $height={120}>
        <Plot y={1220} h={304}>
          <Frame y={1220} h={304} />
          <Bars values={VOLUME} base={1521} stacked />
        </Plot>
        <AxisLabel $spot="top">23259</AxisLabel>
        <ExpandButton aria-label="放大">
          <svg width="30" height="30" viewBox="0 0 30 30" fill="none" stroke={ORANGE} strokeWidth="3">
            <path d="M2 13V2H13M2 2L12 12M28 17V28H17M28 28L17 17" />
          </svg>
        </ExpandButton>
      </ChartFrame>

      <IndicatorBar>
        <Picker name="指标二" options={["MACD"]} size={28} />
        <IndicatorValues $even>
          <IndicatorValue>DIF:-0.193<Arrow /></IndicatorValue>
          <IndicatorValue $color="#edc022">DEA:-0.336<Arrow /></IndicatorValue>
          <IndicatorValue $color="#c62ccc">M:0.288<Arrow /></IndicatorValue>
        </IndicatorValues>
      </IndicatorBar>
      <ChartFrame $height={120}>
        <Plot y={177} h={313}>
          <Frame y={177} h={313} />
          <Bars values={MACD} base={307} />
          <g fill="none" strokeWidth={3}>
            <polyline points={DEA} stroke="#e6c233" />
            <polyline points={DIF} stroke="#333333" />
          </g>
        </Plot>
        <AxisLabel $spot="top">0.750</AxisLabel>
        <AxisLabel $spot="bottom">-1.039</AxisLabel>
      </ChartFrame>

      <IndicatorBar>
        <Picker name="指标三" options={["分时博弈"]} size={20} />
        <IndicatorValues $even>
          <IndicatorValue $color={RED}>超大:-0.731</IndicatorValue>
          <IndicatorValue $color="#edc022">大户:0.092</IndicatorValue>
          <IndicatorValue $color="#3572b4">中户:0.106</IndicatorValue>
          <IndicatorValue $color={GREEN}>小户:0.533</IndicatorValue>
        </IndicatorValues>
      </IndicatorBar>
      <ChartFrame $height={120}>
        <Plot y={633} h={314}>
          <Frame y={633} h={314} />
          <g fill="none" strokeWidth={3}>
            {GAME.map(([color, points]) => (
              <polyline key={color} points={points} stroke={color} />
            ))}
          </g>
        </Plot>
        <AxisLabel $spot="top">0.536</AxisLabel>
        <AxisLabel $spot="bottom">-0.737</AxisLabel>
      </ChartFrame>

      <IndicatorBar>
        <Picker name="指标四" options={["量比"]} size={29} />
        <IndicatorValues>
          <IndicatorValue>1.022<Arrow down /></IndicatorValue>
        </IndicatorValues>
      </IndicatorBar>
      <ChartFrame $height={120}>
        <Plot y={1090} h={314}>
          <Frame y={1090} h={314} />
          <polyline points={RATIO} fill="none" stroke="#333333" strokeWidth={3} />
        </Plot>
        <AxisLabel $spot="top">13.704</AxisLabel>
        <AxisLabel $spot="bottom">0.977</AxisLabel>
      </ChartFrame>

      <TimeAxis>
        <span>09:30</span>
        <span>15:30</span>
      </TimeAxis>

      <DrawerHandle aria-label="展开侧栏">
        <svg width="17" height="34" viewBox="0 0 17 34" fill="none" stroke="#fff" strokeWidth="2.5">
          <path d="M1 1L15 17L1 33" />
        </svg>
      </DrawerHandle>

      <Marks viewBox="0 657 1510 1174" preserveAspectRatio="none" aria-hidden="true">
        <g fill="none" stroke="#00ff00" strokeWidth="11" strokeLinecap="round" strokeLinejoin="round">
          <path d="M1373 1101Q1352 1142 1332 1178Q1308 1222 1301 1252" />
          <path d="M1267 1180Q1272 1225 1270 1252Q1272 1278 1275 1299Q1280 1300 1288 1291L1332 1251Q1346 1238 1363 1211" />
          <path d="M1222 1382L1227 1422M1221 1395L1226 1420M1255 1388L1254 1420M1290 1385L1273 1418" />
        </g>
      </Marks>
    </ChartColumn>
  );
}

function OrderPanel() {
  return (
    <SidePanel>
      <Book>
        <BookTabs>
          <BookTab $active>千档</BookTab>
          <BookTab>大单</BookTab>
          <BookTab>分价</BookTab>
        </BookTabs>
        <BookLink href="#levels">查看千档行情 &gt;</BookLink>
        <LevelTable levels={SELLS} />
        <Balance />
        <LevelTable levels={BUYS} />
      </Book>
      <Trades>
        <TradesHeader>
          分时成交
          <Triangle w={18} h={12} color="#5a5c5a" up />
        </TradesHeader>
        <TradesTable>
          <tbody>
            {TRADES.map(([time, price, rising, amount]) => (
              <tr key={amount}>
                <TradeTime>{time}</TradeTime>
                <TradePrice>{price}</TradePrice>
                <TradeArrow>
                  {rising && (
                    <svg width="14" height="22" viewBox="0 0 14 22" fill="none" stroke="#e01010" strokeWidth="3" aria-hidden="true">
                      <path d="M7 21V3M1 9L7 2L13 9" />
                    </svg>
                  )}
                </TradeArrow>
                <TradeAmount>{amount}</TradeAmount>
              </tr>
            ))}
          </tbody>
        </TradesTable>
      </Trades>
    </SidePanel>
  );
}

function BestLevels() {
  return (
    <Levels id="levels">
      <LevelSide>
        <LevelBest>
          <span>卖1</span>
          <LevelPrice>101.44</LevelPrice>
          <span>12.2万</span>
        </LevelBest>
        <LevelQueue $color={GREEN}>
          <span>10.1万</span>
          <span>1.0万</span>
          <span>1.0万</span>
        </LevelQueue>
      </LevelSide>
      <LevelSide>
        <LevelBest>
          <span>买1</span>
          <LevelPrice>101.42</LevelPrice>
          <span>22.3万</span>
        </LevelBest>
        <LevelQueue $color={RED}>
          <span>18.3万</span>
          <span>4.1万</span>
        </LevelQueue>
      </LevelSide>
    </Levels>
  );
}

function Actions() {
  const icon = { width: 56, height: 50, viewBox: "0 0 56 50", fill: "none", stroke: GREY, strokeWidth: 2.6 };
  return (
    <BottomBar>
      <IndexButton>
        <Triangle w={20} h={7} color={GREY} up />
        <IndexValue>3843.65</IndexValue>
        <IndexRow>
          <IndexName>上证</IndexName>
          <span>-1.85%</span>
        </IndexRow>
      </IndexButton>
      <BottomItem>
        <svg {...icon}>
          <path d="M14 6Q24 -1 36 4Q54 14 51 37M1 17L6 13V20Q2 38 16 46Q29 53 43 44M55 34L51 38L48 30" />
          <path d="M20 14L28 23L36 14M28 23V38M19 25H37M19 32H37" />
        </svg>
        交易
      </BottomItem>
      <BottomItem>
        <svg {...icon}>
          <path d="M38 3H12Q5 3 5 10V41Q5 48 12 48H44Q51 48 51 41V17" />
          <path d="M23 30L44 9" strokeWidth="5" />
          <path d="M47 7L50 4" strokeWidth="6" />
        </svg>
        发帖
      </BottomItem>
      <BottomItem>
        <svg {...icon}>
          <rect x="6.5" y="4" width="19" height="19" rx="3" />
          <rect x="6.5" y="28" width="19" height="19" rx="3" />
          <rect x="30.5" y="28" width="19" height="19" rx="3" />
          <rect x="32.5" y="6" width="15" height="15" rx="3" transform="rotate(45 40 13.5)" />
        </svg>
        功能
      </BottomItem>
      <BottomItem>
        <svg {...icon}>
          <circle cx="28" cy="25" r="23.5" />
          <g fill={GREY} stroke="none">
            <circle cx="17.5" cy="25" r="2.8" />
            <circle cx="28" cy="25" r="2.8" />
            <circle cx="38.5" cy="25" r="2.8" />
          </g>
        </svg>
        设自选
      </BottomItem>
    </BottomBar>
  );
}

const SQUIRCLE = "M42 0C72 0 84 12 84 42C84 72 72 84 42 84C12 84 0 72 0 42C0 12 12 0 42 0Z";

function SystemDock() {
  const app = { width: 84, height: 84, viewBox: "0 0 84 84" };
  return (
    <Dock>
      <DockButton aria-label="全部应用">
        <svg width="44" height="44" viewBox="0 0 44 44" fill="#5d5b5e">
          {[5, 22, 39].map((y) => [5, 22, 39].map((x) => <circle key={`${x}-${y}`} cx={x} cy={y} r="4" />))}
        </svg>
      </DockButton>
      <DockApps>
        <DockButton aria-label="电话">
          <svg {...app}>
            <defs>
              <linearGradient id="phone" x1="0" y1="0" x2="0" y2="1">
                <stop offset="0" stopColor="#1eee5c" />
                <stop offset="1" stopColor="#009a45" />
              </linearGradient>
            </defs>
            <path d={SQUIRCLE} fill="url(#phone)" />
            <path d="M48 13Q51 13 51 17L48 28Q46 32 41 31Q37 42 41 54Q46 52 49 56L51 66Q51 72 44 71Q29 62 30 40Q31 19 44 13Z" fill="#ffffff" />
            <path d="M48 13Q51 13 51 17L48 28Q46 32 41 31L43 14Z" fill="#c9f5d4" />
            <path d="M41 54Q46 52 49 56L51 66Q51 71 46 71Z" fill="#c9f5d4" />
          </svg>
        </DockButton>
        <DockButton aria-label="信息">
          <svg {...app}>
            <defs>
              <linearGradient id="message" x1="0" y1="0" x2="0" y2="1">
                <stop offset="0" stopColor="#1ba4ff" />
                <stop offset="1" stopColor="#155cff" />
              </linearGradient>
            </defs>
            <path d={SQUIRCLE} fill="url(#message)" />
            <path d="M24 60L22 70L36 63Z" fill="#bcd6ff" />
            <rect x="14" y="17" width="56" height="48" rx="22" fill="#ffffff" />
            <g fill="#1c78ff">
              <circle cx="28" cy="41" r="4.8" />
              <circle cx="42" cy="41" r="4.8" />
              <circle cx="56" cy="41" r="4.8" />
            </g>
          </svg>
        </DockButton>
        <DockButton aria-label="相册">
          <svg {...app}>
            <defs>
              <linearGradient id="gallery" x1="0" y1="0.6" x2="1" y2="0.3">
                <stop offset="0" stopColor="#a80cff" />
                <stop offset="0.35" stopColor="#e4108c" />
                <stop offset="0.6" stopColor="#ff1a50" />
                <stop offset="1" stopColor="#ff6410" />
              </linearGradient>
            </defs>
            <path d={SQUIRCLE} fill="url(#gallery)" />
            {[0, 60, 120, 180, 240, 300].map((a) => (
              <path
                key={a}
                d="M42 42Q32 27 34 20Q36 13 42 13Q48 13 50 20Q52 27 42 42Z"
                fill="#ffffff"
                opacity={a % 120 === 0 ? 1 : 0.7}
                transform={`rotate(${a} 42 42)`}
              />
            ))}
            <circle cx="42" cy="42" r="6.5" fill="#ff4d0a" />
          </svg>
        </DockButton>
        <DockButton aria-label="相机">
          <svg {...app}>
            <defs>
              <linearGradient id="camera" x1="0" y1="0" x2="0" y2="1">
                <stop offset="0" stopColor="#c3cacf" />
                <stop offset="1" stopColor="#a3a6b6" />
              </linearGradient>
            </defs>
            <path d={SQUIRCLE} fill="url(#camera)" />
            <rect x="13" y="17" width="58" height="49" rx="9" fill="#ffffff" />
            <circle cx="22" cy="26" r="3.5" fill="#e23333" />
            <circle cx="42" cy="42" r="18" fill="#1b1b1d" />
            <circle cx="42" cy="42" r="10.5" fill="#3b3c50" />
            <path d="M42 42L33 36Q37 31 42 31.5Z" fill="#3fb3c7" />
            <circle cx="42" cy="42" r="5" fill="#08080a" />
          </svg>
        </DockButton>
      </DockApps>
      <DockDivider />
      <DockApps>
        <DockButton aria-label="短线王">
          <svg {...app}>
            <clipPath id="squircle">
              <path d={SQUIRCLE} />
            </clipPath>
            <path d={SQUIRCLE} fill="#ffffff" />
            <g clipPath="url(#squircle)">
              <path d="M7 25H19V54H15V59H12V54H7Z" fill="#12bcbc" />
              <path d="M27 44V68M22 55H33" stroke="#12a8a8" strokeWidth="3" />
              <g fill="none" stroke="#e04040" strokeWidth="2.6">
                <path d="M38 33H46V60H38ZM42 28V33M42 60V66M54 26H62V42H54ZM58 21V26M58 42V47M68 9H76V27H68ZM72 5V9M72 27V32" />
              </g>
              <path d="M0 71Q42 65 84 71V84H0Z" fill="#f0452f" />
            </g>
            <text x="43" y="80" fontSize="12" fontWeight="500" fill="#ffffff" textAnchor="middle">短 线 王</text>
          </svg>
        </DockButton>
        <DockButton aria-label="微信">
          <svg {...app}>
            <path d={SQUIRCLE} fill="#06d066" />
            <path d="M22 48L19 55L28 51Z" fill="#ffffff" />
            <ellipse cx="34" cy="36" rx="21.5" ry="18" fill="#ffffff" />
            <ellipse cx="53" cy="48.5" rx="19.5" ry="16.5" fill="#06d066" />
            <ellipse cx="53" cy="48.5" rx="18" ry="15" fill="#ffffff" />
            <path d="M66 57L66 65L57 61Z" fill="#ffffff" />
            <g fill="#06c860">
              <circle cx="27" cy="30" r="2.8" />
              <circle cx="41" cy="30" r="2.8" />
              <circle cx="48" cy="44" r="2.4" />
              <circle cx="59" cy="44" r="2.4" />
            </g>
          </svg>
        </DockButton>
      </DockApps>
      <DockNav>
        <DockButton aria-label="最近任务">
          <svg width="40" height="42" viewBox="0 0 40 42" stroke="#5d5b5e" strokeWidth="3.4" strokeLinecap="round">
            <path d="M3 3V39M20 3V39M37 3V39" />
          </svg>
        </DockButton>
        <DockButton aria-label="主页">
          <svg width="44" height="44" viewBox="0 0 44 44" fill="none" stroke="#5d5b5e" strokeWidth="4">
            <rect x="3" y="3" width="38" height="38" rx="14" />
          </svg>
        </DockButton>
        <DockButton aria-label="后退">
          <svg width="28" height="44" viewBox="0 0 28 44" fill="none" stroke="#5d5b5e" strokeWidth="3.6" strokeLinecap="round" strokeLinejoin="round">
            <path d="M26 2L3 22L26 42" />
          </svg>
        </DockButton>
      </DockNav>
    </Dock>
  );
}

export default function App() {
  return (
    <Page>
      <GlobalStyle />
      <Status />
      <TopBar />
      <QuotePanel />
      <NoticeBar />
      <Periods />
      <LatestBar>
        <LatestText $color="#f4b848" $gap={6}>均价：104.22</LatestText>
        <LatestText $color={GREEN} $gap={16}>最新：101.42</LatestText>
        <LatestText $color={GREEN} $gap={16}>-3.26</LatestText>
        <LatestText $color={GREEN} $gap={0}>-3.11%</LatestText>
        <LatestActions>
          <button aria-label="说明">
            <svg width="30" height="30" viewBox="0 0 30 30" fill="none" stroke="#9a9a9a" strokeWidth="2.2">
              <circle cx="15" cy="15" r="13.5" />
              <path d="M10.5 12Q10.5 8 15 8Q19.5 8 19.5 11.5Q19.5 14 15 16V18.5M15 21V23.5" />
            </svg>
          </button>
          <ModeButton>大单模式</ModeButton>
        </LatestActions>
      </LatestBar>
      <Board>
        <Charts />
        <OrderPanel />
      </Board>
      <BestLevels />
      <Actions />
      <SystemDock />
    </Page>
  );
}
